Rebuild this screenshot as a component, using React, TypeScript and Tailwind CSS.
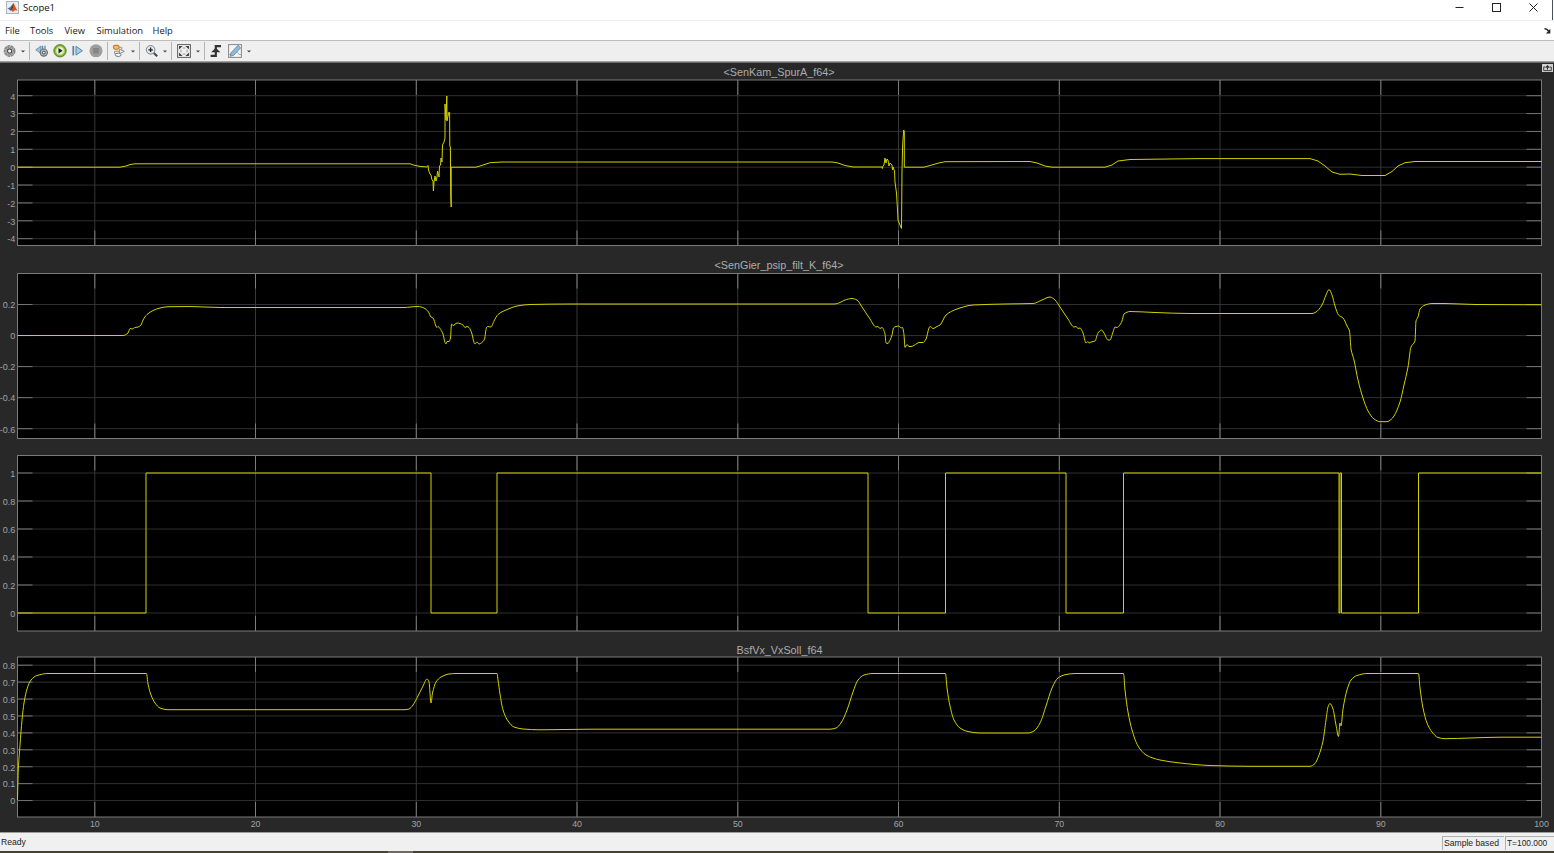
import type { ReactNode } from 'react';

type Tick = { y: number; label: string };

type ScopePlot = {
  title?: string;
  titleX?: number;
  titleY?: number;
  top: number; // 軸の上端
  bottom: number; // 軸の下端
  viewTop: number;
  viewHeight: number;
  ticks: Tick[];
  signal: string;
};

const LEFT = 17.5;
const RIGHT = 1541.5;

const X_TICKS = [94.8, 255.5, 416.3, 577, 737.8, 898.5, 1059.3, 1220, 1380.8];
const X_LABELS = ['10', '20', '30', '40', '50', '60', '70', '80', '90', '100'];

// 等間隔の目盛りを生成
function makeTicks(labels: string[], y0: number, step: number): Tick[] {
  return labels.map((label, i) => ({ y: y0 + i * step, label }));
}

// M/L/H の折れ線を単調な3次曲線に変換 (xは単調増加)
function smooth(path: string): string {
  const pts: [number, number][] = [];
  for (const [, cmd, args] of path.matchAll(/([MLH])([^MLH]+)/g)) {
    const n = args.trim().split(' ').map(Number);
    pts.push(cmd === 'H' ? [n[0], pts[pts.length - 1][1]] : [n[0], n[1]]);
  }
  const slope = pts.slice(1).map(([x, y], i) => (y - pts[i][1]) / (x - pts[i][0]));
  const tangent = pts.map((_, i) => {
    const a = slope[i - 1] ?? slope[i];
    const b = slope[i] ?? a;
    return a * b <= 0 ? 0 : (2 * a * b) / (a + b);
  });
  let d = `M${pts[0][0]} ${pts[0][1]}`;
  for (let i = 1; i < pts.length; i++) {
    const [x0, y0] = pts[i - 1];
    const [x1, y1] = pts[i];
    const h = (x1 - x0) / 3;
    d += `C${x0 + h} ${y0 + tangent[i - 1] * h} ${x1 - h} ${y1 - tangent[i] * h} ${x1} ${y1}`;
  }
  return d;
}

const PLOTS: ScopePlot[] = [
  {
    title: '<SenKam_SpurA_f64>',
    titleX: 779,
    titleY: 75.5,
    top: 80,
    bottom: 245.5,
    viewTop: 63,
    viewHeight: 192,
    ticks: makeTicks(['4', '3', '2', '1', '0', '-1', '-2', '-3', '-4'], 95.7, 17.87),
    signal:
      'M17.5 167.2H120L126 166L130 164.6L135 163.8H410L414 165.2L420 166.4L427 167L428 165.5L428.5 170L430 174L431 175L432 180L433 181L433.4 191L434 182L435 176L436 181L437 177L437.5 171L439 177L439.5 166L440.5 165L441 158L442 162L442.5 145L444 142L445 138V104L446 120L446.8 96L447 121L448 116L449 112L449.6 113L449.8 146L450.4 147L450.7 195L451.2 207V167.2H476L480 166L490 162.7L502 162H832L838 163L845 165.5L853 167H882L882.3 168.5L883 166L884 165L885 158L886 163L887 159L888 160L889 166L890 163L892 165L892.5 170L893 167L894.5 171L895 182L896.5 193L897.5 210L898 220L900 225L901.5 228.5L902 171L902.7 144L903.7 130L904.3 132V167.2H924L930 165.5L938 163.2L945 161.7L1030 161.5L1037 163L1045 166L1052 167.2H1105L1112 165L1118 161L1130 159.5L1200 158.6H1310L1318 161L1325 166L1332 172L1340 174.3L1350 174L1362 175.5H1385L1392 171.5L1398 166L1405 162.7L1415 161.5H1541.5',
  },
  {
    title: '<SenGier_psip_filt_K_f64>',
    titleX: 779,
    titleY: 268.5,
    top: 273.5,
    bottom: 438.5,
    viewTop: 255,
    viewHeight: 192,
    ticks: makeTicks(['0.2', '0', '-0.2', '-0.4', '-0.6'], 304.5, 31.05),
    signal: smooth(
      'M17.5 335.5H123L125 335L128 333L130 328.5L132 329L135 327.5L138 327L141 325L143 320L147 314.5L153 310.5L160 308L168 306.7L190 306.5L220 307.5H405L410 307L418 306.5L424 308L428.5 312L431 317L433 318L437 327.5L438 326.5L440 328.5L443 334L445 342.5L446 344L447 341.5L449 341.5L450.5 338L451.5 324L453 325.5L457 323L463 325L465 327.5L467 326.5L469 327.5L472 334L474 342.5L475 344L477 342L479 344L482.5 342L484.5 339L486.5 327.5L488 326.5L491 327L494 321L498 314.5L506 310L518 305.8L530 304.5L570 304H835L840 302.5L845 300L852 298.5L857 300L862 307L870 319L876 327L878 326.5L880 328.5L882 327.5L885 334L886 343L888 343.5L889 342L892 335L893.5 328L896 326.5L899 326L901 328L902.5 327.5L904 335L905 347.5L907 344.5L909 346.5L911 346.5L917 343.5L919 342.5L923 342.5L926 339L929 328L930 326.5L933 328.5L937 326.5L940 325L946 315L957 309L973 305L1005 304L1033 303.5L1042 300L1050 297L1055 300L1060 307L1068 319L1074 327L1076 326.5L1078 328.5L1080 328L1083 333L1086 343L1088 341.5L1089 343L1091 342L1095 341L1098 333L1101.5 330L1104 333L1108 340H1110L1113 332L1115 327L1117 327.5L1119 326L1122 321L1124 314L1130 311.5L1155 312.5L1190 313.5H1312L1316 312L1322 305L1326 295L1329 289.5L1332 295L1335 306L1338.5 315L1343 318L1347 326L1349.5 331L1351 349L1354 360L1358 380L1363 398L1368 411L1374 419L1380 421.7H1387L1391 419.5L1394 416L1400 402L1404 385L1408 367L1411 347L1415 341L1416 321L1418 317L1420 309L1425 305L1432 303.5H1445L1475 304.5L1541.5 304.8',
    ),
  },
  {
    top: 455.5,
    bottom: 631,
    viewTop: 447,
    viewHeight: 193,
    ticks: makeTicks(['1', '0.8', '0.6', '0.4', '0.2', '0'], 473, 28),
    signal:
      'M17.5 613H146V473H431V613H497V473H868V613H945.5V473H1066V613H1123.5V473H1339V613H1340V473H1341.5V613H1418.5V473H1541.5',
  },
  {
    title: 'BsfVx_VxSoll_f64',
    titleX: 779.5,
    titleY: 653.5,
    top: 657,
    bottom: 817,
    viewTop: 640,
    viewHeight: 192,
    ticks: makeTicks(['0.8', '0.7', '0.6', '0.5', '0.4', '0.3', '0.2', '0.1', '0'], 665.2, 16.92),
    signal: smooth(
      'M17.5 800L18.3 770L20 745L22 720L24 703L27 689L31 680L37 675.5L48 673.5H146.5L148 684L151 695L155 703L160 708L168 709.7H405L409 709L413 705L418 696L423 686L427 679L429 682L431 703L432.5 693L436 682L441 677L449 674L456 673.5H497L498 680L500 694L503 710L508 721L514 727L523 729L540 729.8L590 729.2H830L836 728L841 723L847 710L853 692L858 680L864 675L873 673.5H945.5L947 688L950 706L954 720L960 728L968 731.5L980 733H1028L1034 731L1040 723L1046 706L1052 688L1058 678L1066 674.5L1075 673.5H1123.5L1125 690L1128 712L1132 730L1138 746L1146 755L1160 760L1180 763L1210 765.5L1250 766.3H1310L1315 763.5L1319 755L1323 741L1326 720L1328 707L1330 703.5L1333 709L1336 725L1338.5 736.5L1340 723L1341 726L1343 709L1347 690L1351 680L1357 675.5L1367 673.5H1418.5L1420 688L1423 708L1427 723L1432 732L1438 737.5L1445 738.7L1470 738L1500 737.2H1541.5',
    ),
  },
];

function Plot({ plot, showX }: { plot: ScopePlot; showX?: boolean }) {
  const { top, bottom } = plot;
  return (
    <svg
      className="block w-full shrink-0 font-['Liberation_Sans',sans-serif]"
      width={1554}
      height={plot.viewHeight}
      viewBox={`0 ${plot.viewTop} 1554 ${plot.viewHeight}`}
    >
      <rect x={LEFT} y={top} width={RIGHT - LEFT} height={bottom - top} fill="#000" />

      {/* グリッド */}
      {plot.ticks.map((t) => (
        <g key={t.label}>
          <path d={`M${LEFT} ${t.y}H${RIGHT}`} stroke="#303030" />
          <path d={`M${LEFT} ${t.y}h15M${RIGHT} ${t.y}h-15`} stroke="#747474" />
        </g>
      ))}
      {X_TICKS.map((x) => (
        <g key={x}>
          <path d={`M${x} ${top}V${bottom}`} stroke="#383838" />
          <path d={`M${x} ${top}v15M${x} ${bottom}v-15`} stroke="#7c7c7c" />
        </g>
      ))}
      <rect x={LEFT} y={top} width={RIGHT - LEFT} height={bottom - top} fill="none" stroke="#7a7a7a" />

      {/* 信号 */}
      <path d={plot.signal} fill="none" stroke="#d2d200" strokeLinejoin="round" />

      {/* ラベル */}
      {plot.ticks.map((t) => (
        <text key={t.label} x={15.3} y={t.y + 3.8} textAnchor="end" fontSize={9} fill="#a2a2a2">
          {t.label}
        </text>
      ))}
      {showX &&
        X_LABELS.map((label, i) => (
          <text key={label} x={94.8 + i * 160.75} y={827.4} textAnchor="middle" fontSize={8.8} fill="#a2a2a2">
            {label}
          </text>
        ))}
      {plot.title && (
        <text x={plot.titleX} y={plot.titleY} textAnchor="middle" fontSize={10.8} fill="#acacac">
          {plot.title}
        </text>
      )}
    </svg>
  );
}

function Icon({ children, className }: { children: ReactNode; className?: string }) {
  return (
    <svg width={14} height={14} viewBox="0 0 14 14" fill="none" className={`shrink-0 ${className ?? ''}`}>
      {children}
    </svg>
  );
}

function Caret({ className }: { className?: string }) {
  return (
    <svg width={4} height={3} viewBox="0 0 4 3" className={`shrink-0 ${className ?? ''}`}>
      <path d="M0 .4h4L2 2.6z" fill="#444" />
    </svg>
  );
}

function Separator({ className }: { className?: string }) {
  return <div className={`h-[18px] w-px shrink-0 bg-[#b4b4b4] ${className ?? ''}`} />;
}

function MatlabLogo() {
  return (
    <svg width={13} height={13} viewBox="0 0 13 13" className="shrink-0">
      <rect x=".5" y=".5" width="12" height="12" fill="#e9eef3" stroke="#a9b4be" />
      <path d="M1.3 7.7L4 6.2L6.2 3.8L7.4 2L5.6 8.8L4.2 9.8L3 8.3z" fill="#3c76a6" />
      <path d="M7.4 2C8.5 3.2 9.5 7 11.6 9.8C9.8 8.8 8.6 9 7 11L5 9.3L6.3 5.2z" fill="#d65420" />
      <path d="M7.4 2L7 6.8L5 9.3L4.2 9.8L6 6z" fill="#6b2518" />
    </svg>
  );
}

function Toolbar() {
  return (
    <div className="flex h-[22px] shrink-0 items-center border-y border-[#bdbdbd] border-b-[#a0a0a0] bg-[#efefef]">
      {/* 設定 */}
      <Icon className="ml-[3px]">
        <circle cx="6.6" cy="7" r="5.2" fill="#c9c9c9" stroke="#858585" strokeWidth="1.4" strokeDasharray="3 .6" />
        <circle cx="6.6" cy="7" r="3.9" stroke="#8a8a8a" />
        <circle cx="6.6" cy="7" r="2.1" fill="#fff" stroke="#4c4c4c" strokeWidth="1.2" />
      </Icon>
      <Caret className="ml-1" />
      <Separator className="ml-1" />
      {/* ステップオプション */}
      <Icon className="ml-[5px]">
        <path d="M.8 5.8L6 2v7.6z" fill="#9fc4df" stroke="#5683a7" strokeWidth=".8" />
        <path d="M7.6 1.8v4M10 1.8v3" stroke="#6189a9" strokeWidth="1.3" />
        <circle cx="8.8" cy="8.6" r="3.6" fill="#b7bdc2" stroke="#666d72" strokeWidth="1.2" />
        <circle cx="8.8" cy="8.6" r="1.4" fill="#fff" stroke="#444" />
      </Icon>
      {/* 実行 */}
      <Icon className="ml-[3.5px]">
        <circle cx="7" cy="6.8" r="6.2" fill="#7fae32" stroke="#4c7618" strokeWidth=".8" />
        <circle cx="7" cy="6.8" r="4.3" fill="#e4f3c8" stroke="#a7cf64" />
        <path d="M5.5 4.1v5.4L9.6 6.8z" fill="#222" />
      </Icon>
      <Icon className="ml-1">
        <path d="M2.3 2v9.4" stroke="#5683aa" strokeWidth="1.8" />
        <path d="M5 2.3v8.8L11.4 6.7z" fill="#a9cbe5" stroke="#5683aa" />
      </Icon>
      <Icon className="ml-1">
        <circle cx="7" cy="6.8" r="6.5" fill="#9e9e9e" />
        <rect x="4.2" y="4" width="5.6" height="5.6" fill="#858585" />
      </Icon>
      <Separator className="ml-1" />
      <Icon className="ml-[4.5px]">
        <rect x="1.4" y="1.4" width="5.8" height="3.8" rx="1.6" fill="#f6b66c" stroke="#cf7b2d" strokeWidth="1.1" />
        <path d="M7.4 3.3h2.4v3M6 9.6H2.6V7.2h4.6" stroke="#8a8a8a" strokeWidth=".9" />
        <path d="M7.6 5.2l4.8 2.2l-4.8 2.2z" fill="#fff" stroke="#858585" strokeWidth=".9" />
        <ellipse cx="6.2" cy="10.8" rx="2.9" ry="1.7" fill="#f5f5f5" stroke="#6e6e6e" strokeWidth=".9" />
      </Icon>
      <Caret className="ml-[4.5px]" />
      <Separator className="ml-1" />
      {/* ズーム */}
      <Icon className="ml-[5.5px]">
        <circle cx="5.6" cy="5.8" r="4.3" fill="#e3e9ed" stroke="#808080" strokeWidth="1" />
        <path d="M3.4 5.8h4.4M5.6 3.6v4.4" stroke="#222" strokeWidth="1.3" />
        <path d="M8.8 9l3.4 3.2" stroke="#444" strokeWidth="2" />
      </Icon>
      <Caret className="ml-1" />
      <Separator className="ml-1" />
      <Icon className="ml-[5px]">
        <rect x=".6" y=".6" width="12.8" height="12.8" fill="#f1f1f1" stroke="#606060" />
        <path d="M2 2h3.6L2 5.6zM12 2H8.4L12 5.6zM2 12h3.6L2 8.4zM12 12H8.4L12 8.4z" fill="#444" />
        <path d="M5.6 4h2.8M5.6 10h2.8M4 5.6v2.8M10 5.6v2.8" stroke="#999" />
      </Icon>
      <Caret className="ml-[4.5px]" />
      <Separator className="ml-[4px]" />
      {/* トリガー */}
      <Icon className="ml-[4.5px]">
        <path d="M1.6 11.8h5.2V2.2H12" stroke="#333" strokeWidth="2.2" />
        <path d="M2.2 8.2L6.8 3.8L11.4 8.2z" fill="#333" />
      </Icon>
      <Icon className="ml-[5px]">
        <rect x=".6" y=".6" width="12.8" height="12.8" fill="#f4f4f4" stroke="#888" />
        <path d="M1 10.5h3l2-3h3l2 3h2" stroke="#999" strokeWidth=".8" />
        <path d="M2.3 12.3l.8-3.6L10 1.3l2.6 2.5l-6.9 7.5z" fill="#8fbadb" stroke="#557f9f" strokeWidth=".8" />
      </Icon>
      <Caret className="ml-[4.5px]" />
    </div>
  );
}

function TitleBar() {
  return (
    <div className="flex h-5 shrink-0 items-center bg-white pl-[6px] pb-[5px]">
      <MatlabLogo />
      <span className="ml-1 text-[9.5px] leading-none text-[#111]">Scope1</span>
      <div className="ml-auto flex items-center gap-[28px] pr-[16px] text-[#222]">
        <svg width={9} height={9} viewBox="0 0 9 9">
          <path d="M.5 4.5h8" stroke="currentColor" />
        </svg>
        <svg width={9} height={9} viewBox="0 0 9 9">
          <rect x=".5" y=".5" width="8" height="8" fill="none" stroke="currentColor" />
        </svg>
        <svg width={9} height={9} viewBox="0 0 9 9">
          <path d="M.5.5l8 8M8.5.5l-8 8" stroke="currentColor" />
        </svg>
      </div>
      <div className="absolute top-0 right-[1px] h-5 w-px bg-[#46525e]" />
    </div>
  );
}

function MenuBar() {
  return (
    <div className="flex h-5 shrink-0 items-center border-t border-[#ececec] bg-white pl-[5px] text-[9.4px] leading-none text-[#222]">
      <span className="w-[25px]">File</span>
      <span className="w-[34.5px]">Tools</span>
      <span className="w-8">View</span>
      <span className="w-[56px]">Simulation</span>
      <span>Help</span>
      <svg width={7} height={6} viewBox="0 0 7 6" className="ml-auto mr-[3px]">
        <path d="M.5.8C2.5.6 3.5 1.5 4.5 3" fill="none" stroke="#222" strokeWidth="1.4" />
        <path d="M6.3.8V5.4H2z" fill="#222" />
      </svg>
    </div>
  );
}

export default function App() {
  return (
    <div className="relative flex h-[853px] w-[1554px] flex-col overflow-hidden bg-[#282828] font-['Open_Sans','Noto_Sans',sans-serif]">
      <TitleBar />
      <MenuBar />
      <Toolbar />
      <div className="h-px shrink-0 bg-[#6a6a6a]" />

      <main className="flex flex-1 flex-col">
        {PLOTS.map((plot, i) => (
          <Plot key={plot.top} plot={plot} showX={i === PLOTS.length - 1} />
        ))}
      </main>
      {/* 最大化ボタン */}
      <svg width={11} height={8} viewBox="0 0 11 8" className="absolute top-[64px] right-[1px]">
        <rect width="11" height="8" fill="#d0d0d0" />
        <path d="M3.2 3H1.7v3.6h7.6V3H7.8" fill="none" stroke="#444" />
        <path d="M5.5 1L3.2 3.8h4.6zM5 3.5h1v2H5z" fill="#222" />
      </svg>

      <footer className="flex h-[19px] shrink-0 items-center border-t border-[#9b9b9b] bg-[#f0f0f0] pt-px font-['Liberation_Sans',sans-serif] text-[8.6px] leading-none text-[#222]">
        <span className="pl-px">Ready</span>
        <span className="ml-auto flex h-[14px] w-[62px] items-center border-t border-l border-[#b0b0b0] pl-px">
          Sample based
        </span>
        <span className="ml-px flex h-[14px] w-[49px] items-center border-t border-l border-[#b0b0b0] pl-px text-[8.4px]">
          T=100.000
        </span>
      </footer>
      <div className="flex h-[2px] shrink-0 bg-[#45412f]">
        <div className="ml-[388px] w-[25px] bg-[#6f6c5f]" />
      </div>
    </div>
  );
}
